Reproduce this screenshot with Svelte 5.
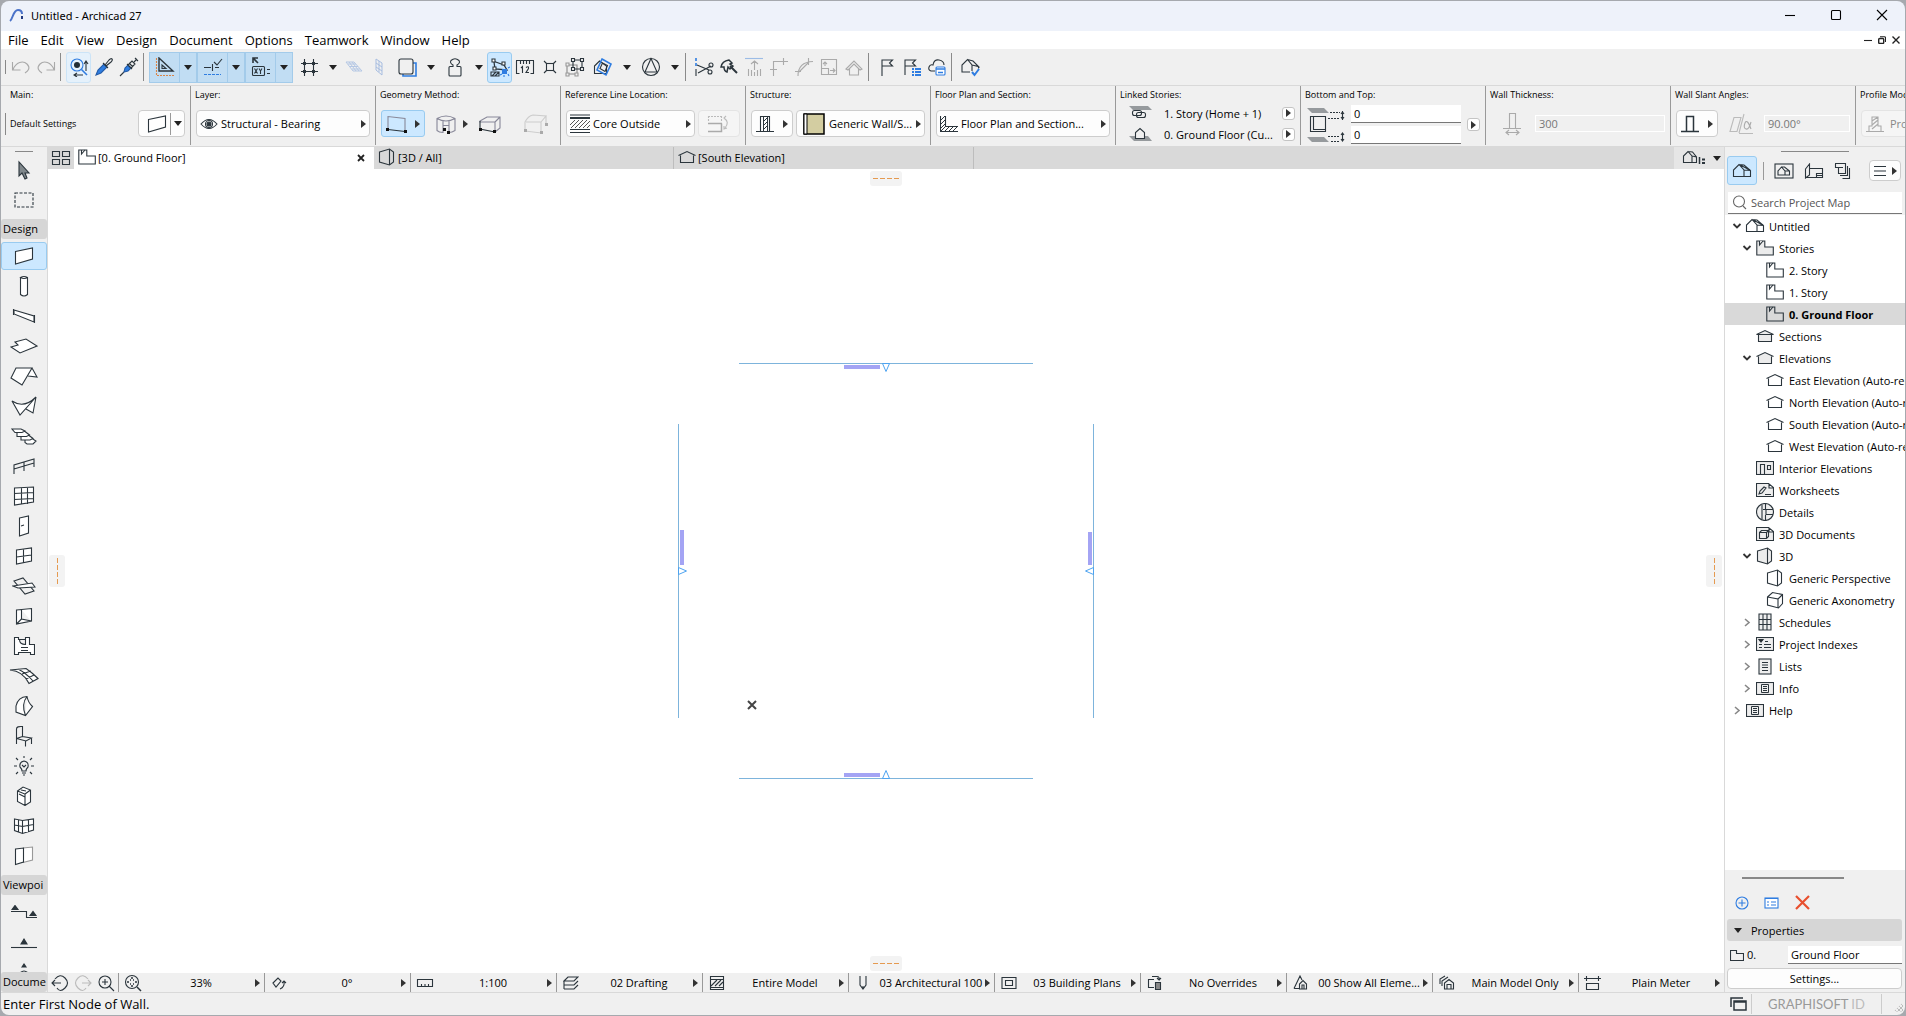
<script lang="ts">
    const blue = '#2f7de1'

    // [width, height, svg body]
    const icons: Record<string, [number, number, string]> = {
        logo: [16, 16, '<path d="M1 14C4 12 4 3 9 3c3 0 4 2 4 4" stroke="#4a72c8" stroke-width="2"/><path d="M13 9v3" stroke="#223a80" stroke-width="2"/>'],
        min: [12, 12, '<path d="M1 6.500h10" stroke="#000"/>'],
        max: [12, 12, '<rect x="1.500" y="1.500" width="9" height="9" rx="1" stroke="#000"/>'],
        close: [12, 12, '<path d="M1 1l10 10M11 1L1 11" stroke="#000"/>'],
        mdiMin: [8, 8, '<path d="M0 4.500h8" stroke="#222"/>'],
        mdiRestore: [8, 8, '<rect x=".7" y="2.500" width="5" height="5" rx="1" stroke="#222" stroke-width="1.400"/><path d="M2 .7h4.500q1 0 1 1V6" stroke="#222"/>'],
        mdiClose: [8, 8, '<path d="M.5.5l7 7M7.500.500l-7 7" stroke="#222" stroke-width="1.400"/>'],
        tabClose: [8, 8, '<path d="M1 1l6 6M7 1L1 7" stroke="#222" stroke-width="1.800"/>'],
        down: [8, 5, '<path d="M0 0h8L4 5z" fill="#222" stroke="none"/>'],
        right: [5, 8, '<path d="M0 0v8l5-4z" fill="#333" stroke="none"/>'],
        undo: [20, 16, '<path d="M1.500 3v8h8M2 10.500C5 3 12 1 16 5s1 7-2 9" stroke="#a9a9a9"/>'],
        redo: [20, 16, '<path d="M18.500 3v8h-8M18 10.500C15 3 8 1 4 5s-1 7 2 9" stroke="#a9a9a9"/>'],
        find: [20, 20, `<circle cx="8" cy="8" r="6" stroke="${blue}"/><path d="M12.500 12.500L18 18" stroke="${blue}" stroke-width="1.600"/><circle cx="8" cy="8" r="3" fill="#222d33" stroke="none"/><path d="M17 14V5m-2 2l2-3 2 3M14 18H6m2-2l-3 2 3 2"/>`],
        dropper: [20, 20, `<path d="M2 18l2-5 6-6 3 3-6 6z" fill="${blue}" stroke="#245ca8"/><path d="M9 6l5 5M11 8l4-5q2-2 3-1t-1 3l-5 4"/>`],
        syringe: [20, 20, `<path d="M1 19l4-4" /><path d="M5 15l1-4 3-3 3 3-3 3z" fill="${blue}" stroke="#245ca8"/><path d="M8 7l5 5M10 6l4 4M9 8l4-4 3 3-4 4M15 5l3-3M16 1l3 3"/>`],
        guide: [20, 20, '<path d="M4 1v13h14z" stroke-width="1.400"/><path d="M7 8v3.500h4z"/><path d="M1.500 1v18M2 18.500h17" stroke="#d98447" stroke-dasharray="2 1"/>'],
        snapLine: [20, 20, `<path d="M1 10.500h7M12 10.500h4M9.500 7v7M11 5l3 3 5-6"/><path d="M1 17.500h17" stroke="${blue}" stroke-dasharray="3 1"/>`],
        xy: [20, 20, '<path d="M2 6V1h5M2 1l5 5" stroke-width="1.600"/><rect x="1.500" y="9.500" width="12" height="9" rx="1"/><path d="M3.500 11.500l3 5M6.500 11.500l-3 5M8 11.500l1.500 2.500 1.500-2.500M9.500 14v3M16 12.500h3M16 16.500h3"/>'],
        grid: [20, 20, '<path d="M5.500 2v4M5.500 8v5M5.500 15v4M14.500 2v4M14.500 8v5M14.500 15v4M2 6.500h3M7 6.500h6M15 6.500h4M2 14.500h3M7 14.500h6M15 14.500h4"/><path d="M4 5h3v3H4zM13 5h3v3h-3zM4 13h3v3H4zM13 13h3v3h-3z" fill="#2b353c" stroke="none"/>'],
        planeH: [20, 16, '<path d="M2 3h8l8 9h-9zM6 7.500h8M5 3l7 9M8 3l7 9M4 5h8M8 10h8" stroke="#b4c7e4" stroke-width="1"/>'],
        planeV: [12, 20, '<path d="M3 2l6 4v12l-6-5zM6 4v11M3 6l6 4M3 10l6 4" stroke="#a7bde0" stroke-width="1"/>'],
        trace: [20, 20, `<path d="M6 17v2h13V6h-3" stroke="${blue}" stroke-width="1.600"/><rect x="2" y="2" width="14" height="15" rx="2"/>`],
        weight: [16, 20, '<path d="M6 9.500V8Q2.500 6 4 3.500q4-3.500 8 0Q13.500 6 10 8v1.500h3q1 0 1 1V18q0 1-1 1H3q-1 0-1-1v-7.500q0-1 1-1z"/>'],
        suspend: [20, 20, `<path d="M3 4l11 4M4 5l1 7 12 1-3-5" stroke-width="1.300"/><path d="M1 15h8v4H1zM2 19l4-4M5 19l4-4"/><path d="M2 2h3v3H2zM12 5h3v3h-3zM3 10h3v3H3z" fill="#fff"/><path d="M12 12h5v5h-5z" fill="${blue}" stroke="none"/><path d="M10 18l2-1M14 18v2M18 17l1 2M18 11l2-1" stroke="${blue}"/>`],
        ruler: [20, 20, '<path d="M18.500 4v12.500h-3M1.500 4v12.500h3M1 3.500h18M5.500 4v3M8.500 4v3M11.500 4v3M14.500 4v3M6 11l1.500-1.500V16M11 10.500q3-2 2.500 1L11 15.500h3"/>'],
        explode: [20, 20, '<path d="M4 4l12 12M16 4L4 16"/><rect x="6.500" y="6.500" width="7" height="7" fill="#f0f0f0"/>'],
        group: [20, 20, '<path d="M2 8v9h10v-9z" stroke="#888"/><path d="M8 3h9v9H8z"/><path d="M6.500 1.500h3v3h-3zM15.500 1.500h3v3h-3zM15.500 10.500h3v3h-3zM6.500 10.500h3v3h-3z" fill="#f0f0f0"/><path d="M1 6h3v3H1zM1 16h3v3H1zM10 16h3v3h-3z" stroke="#999" fill="#f0f0f0"/>'],
        box3d: [20, 20, `<path d="M1.500 9l5-5 7 5v7.500h-12z"/><path d="M9 2l9 5-5 11-9-5z" stroke="${blue}" stroke-width="1.600"/><path d="M9.500 6l5 2.500-2.500 6-5-3z"/>`],
        north: [20, 20, '<circle cx="10" cy="10" r="8.500"/><path d="M10 1.500L4 15h12z"/>'],
        cut: [20, 20, `<path d="M2 1v3M2 6v3" stroke="${blue}" stroke-width="1.600"/><path d="M2 12v7M3 8l12 5M4 16l13-7"/><circle cx="17" cy="8" r="2"/><circle cx="16" cy="15" r="2"/>`],
        axe: [20, 20, '<path d="M2 10q1-6 8-7l3 3-2 1 3 2-3 3-2-2-1 5q-3-1-3-5z" stroke-width="1.500"/><path d="M11 9l7 7" stroke-width="2"/>'],
        adjust: [20, 20, '<path d="M1 1.500h18" stroke="#9cbce6"/><path d="M10.500 13V4M7 7l3.500-3L14 7M4.500 12v7M7.500 13v6M13.500 13v6M16.500 12v7M10.500 15v4" stroke="#aaa"/>'],
        intersect: [20, 20, '<path d="M4.500 19V4.500H19M14.500 1v7M1 12.500h7" stroke="#aaa"/>'],
        fillet: [20, 20, '<path d="M4 19Q4 5 19 4.500M14.500 1v7M1 14.500h6M5 15L15 5" stroke="#aaa"/>'],
        resize: [20, 20, '<path d="M2.500 2.500h15v15h-15zM2.500 11.500h7v6M6 9V5m-2 2l2-2 2 2M11 13.500h5m-2-2l2 2-2 2" stroke="#aaa"/>'],
        roofs: [20, 20, '<path d="M2 12l8-8 8 8-2 1-6-6-6 6zM5.500 12v6h9v-6" stroke="#aaa"/>'],
        flag: [16, 20, '<path d="M3 19V3h10.500l-3 3 3 3H3"/>'],
        flagList: [20, 20, `<path d="M3 18V3h10.500l-3 3 3 3H3"/><path d="M10 11h2v2h-2zM13 11h6v2h-6zM10 14h2v2h-2zM13 14h6v2h-6zM10 17h2v2h-2zM13 17h6v2h-6z" fill="${blue}" stroke="none"/>`],
        cloud: [20, 20, `<path d="M8 14H4q-3-1-2-4t4-2q1-6 6-5t5 5"/><rect x="9" y="10" width="9" height="8" rx="1" stroke="${blue}" fill="#fff"/><path d="M9 12h9M11 15.500h5" stroke="${blue}" stroke-width="1.600"/>`],
        check: [20, 20, `<path d="M10 15H2V8l5.500-5.500L12 8v6M7.500 2.500L13 4l5.500 5.500L12 8M18.500 9.500v2"/><path d="M12 15l2.500 3 4.500-6" stroke="${blue}" stroke-width="2"/>`],
        wall: [20, 20, '<path d="M1.500 5.500L18.500 2v11l-17 5z" fill="#fff"/>'],
        eye: [18, 12, '<path d="M1 6q8-9 16 0-8 9-16 0z"/><circle cx="9" cy="6" r="3.500"/><circle cx="9" cy="6" r="2" fill="#2b353c"/>'],
        geoWall: [22, 20, '<path d="M2 15V2.500l17 2V18" stroke="#889"/><path d="M2 15.500l17 2"/><path d="M0 14h3v3H0zM18 16h3v3h-3z" fill="#111" stroke="none"/>'],
        geoCurve: [22, 20, '<path d="M2 4.500q9-5 18 0v12q-3 2-6 2v-7H8v7q-4 0-6-2zM2 4.500q9 5 18 0M8 7v5M14 7v5" stroke="#889"/><path d="M8 14h3v3H8zM12 17h3v3h-3z" fill="#111" stroke="none"/>'],
        geoBox: [24, 20, '<path d="M2 7l7-4h13v11l-5 4V8H2zM17 8l5-5" stroke="#889"/><path d="M2 7v8l15 3"/><path d="M1 14h3v3H1zM15 16h3v3h-3z" fill="#111" stroke="none"/>'],
        geoPoly: [26, 22, '<path d="M2 18V9q3-6 8-7l13 1-5 6H3M18 9v11L2 18M23 3v9" stroke="#ccc"/><path d="M1 16h3v3H1zM17 18h3v3h-3zM22 10h3v3h-3z" fill="#aaa" stroke="none"/>'],
        coreOut: [20, 20, '<path d="M0 1h20" stroke-width="1"/><path d="M0 4h20" stroke-width="2"/><path d="M0 15.500h20M0 18.500h20"/><path d="M1 14l8-8M5 14l8-8M9 14l8-8M13 14l7-7M17 14l3-3M0 11l5-5" stroke="#555" stroke-width="1"/>'],
        flip: [24, 20, '<path d="M1 2.500h14M1.500 2v6M14.500 2v6" stroke="#bbb" stroke-dasharray="2 1"/><path d="M1 9.500h14M1 17.500h13.500v-8" stroke="#aaa" stroke-width="1.500"/><path d="M17 4q6 4 1 10M19 2l-2 2 2 2M20 14l-3 1v-3" stroke="#bbb"/>'],
        wallBasic: [18, 18, '<path d="M0 16.500h18M4.500 16V1.500h9V16"/><path d="M7.500 2v14M11.500 2v14M8 6l3-3M8 10l3-3M8 14l3-3" stroke-width="1"/>'],
        fillSwatch: [26, 22, '<rect x="4" y="1" width="20" height="20" fill="#d3cda1" stroke="#000" stroke-width="1.500"/><path d="M4 1h3v20H4z" fill="#fff" stroke="#000" stroke-width="1"/>'],
        floorPlan: [18, 18, '<path d="M.5 1v15.500H18M5.500 1v10.500H18" /><path d="M1 5l4-4M1 9l5-5M1 13l5-5M1 16l5-5M5 16l5-5M9 16l5-5M13 16l5-5" stroke-width="1"/>'],
        linkTop: [24, 14, '<path d="M0 0h19l4 4H4z" fill="#969a9d" stroke="none"/><rect x="3.500" y="4.500" width="9" height="5" rx="2" fill="#f0f0f0"/><rect x="7.500" y="6.500" width="9" height="5" rx="2"/>'],
        linkBottom: [24, 14, '<path d="M0 9h19l4 5H5z" fill="#969a9d" stroke="none"/><path d="M6.500 11.500v-6L11 1.500l4.500 4v6z" fill="#f0f0f0"/>'],
        heights: [38, 36, '<path d="M0 1h17l5 5H5zM0 30h17l5 5H5z" fill="#969a9d" stroke="none"/><path d="M3.500 9.500h15v15h-15zM6.500 9.500v13h12" /><path d="M23 5.500h10M21 11.500h12M21 29.500h12M24 34.500h9" stroke-dasharray="2 1"/><path d="M35.500 4v9M35.500 26v8M34 7l1.500-2L37 7M34 10l1.500 2 1.500-2M34 28l1.500-2 1.500 2M34 32l1.500 2 1.500-2" />'],
        thickness: [18, 24, '<path d="M0 16.500h18M6.500 16V1.500h6V16M3 20.500h13M6 18l-3 2.500L6 23M13 18l3 2.500-3 2.500" stroke="#aaa"/>'],
        vertical: [18, 18, '<path d="M0 16.500h18M5.500 16V1.500h7V16" stroke-width="1.500"/>'],
        alpha: [24, 22, '<path d="M1 18.500L5 4.500h7l-4 14zM10 20L15 1M10 20.500h14" stroke="#bbb"/><path d="M22 9q-2 8-5 7t-1-6 6 6" stroke="#aaa"/>'],
        profile: [18, 18, '<path d="M0 16.500h18M3 16v-5h3V2h6v9h3v5M6 6l6-4M6 10l6-5M6 14l6-5" stroke="#aaa"/>'],
        quad: [20, 16, '<path d="M1.500 1.500h7v5h-7zM11.500 1.500h7v5h-7zM1.500 9.500h7v5h-7zM11.500 9.500h7v5h-7z"/>'],
        story: [18, 16, '<path d="M.8 1h8v6h8.500v8H.8z"/><path d="M3.500 1v4L7 1"/>'],
        view3d: [18, 18, '<path d="M1.500 4l10-3 4 3v10l-4 3-10-3zM11.500 1v16"/>'],
        axon: [18, 18, '<path d="M1.500 6l5-4.500 10 2v9l-4 4.500-11-3zM1.500 6l10.500 2v9M12 8l4.500-4.500"/>'],
        elevation: [18, 14, '<path d="M2.500 5.500v7h13v-7M.5 5.500l8.500-4 8.500 4"/>'],
        section: [18, 14, '<path d="M2.500 5.500v7h13v-7M.5 5.500l8.500-4 8.500 4z"/>'],
        house: [20, 16, '<path d="M1.500 13.500V7L7 1.500 12 7v6.500zM7 1.500l5 .5 6.500 5.500v6H12M12 7l6.500.5M7 1.500l6 3 5.500 3"/>'],
        tabMenu: [24, 16, '<path d="M1.500 12.500V6L6 1.500 10 6v6.500zM6 1.500l4.500.5 4 5v5.500H10M10 6l4.500 1"/><path d="M17.500 7v7" stroke-width="1.500"/><path d="M20 9.500h3M20 13h3" stroke-width="2"/>'],
        viewMap: [20, 16, '<rect x="1" y="1" width="18" height="14"/><path d="M4 12V8l3.500-4L11 8v4zM7.500 4h3l5 4v4H11M11 8h4.500"/>'],
        layout: [20, 16, '<path d="M1.500 6l4-5v11l-4 3zM6 5.500h12.500v9H1.500M12.500 14.500v-4h6M12.500 12.500h6"/>'],
        publisher: [18, 18, '<path d="M1 1.500h10.500v10H4.500V5M1.500 2v3.500h7.500M13.500 4v9.500H6M15.500 6v10.500H8.500"/>'],
        burger: [14, 12, '<path d="M1 1.500h12M1 6h12M1 10.500h12"/>'],
        search: [15, 15, '<circle cx="7" cy="6.500" r="5.500" stroke="#666"/><path d="M11 11l3 3" stroke="#666"/>'],
        open: [10, 8, '<path d="M1.500 2L5 5.500 8.500 2" stroke="#333" stroke-width="1.800"/>'],
        shut: [10, 9, '<path d="M3 1l4 3.500L3 8" stroke="#888" stroke-width="1.600"/>'],
        interior: [18, 14, '<rect x=".5" y=".5" width="17" height="13" fill="#eee"/><path d="M4.500 13V3.500h4V13M11.500 4.500h3v4h-3z"/>'],
        worksheet: [18, 14, '<path d="M.500.500h12l5 4v9H.5zM13 1v4h4" fill="#eee"/><path d="M3 11l1-3 4-4 2 1-4 5zM9 11.500h6"/>'],
        detail: [18, 18, '<circle cx="9" cy="9" r="8.500" fill="#eee"/><path d="M6 1.500v15M9.500 1v5.500h7.500M7 6.500h3v5h7M9.500 12v5"/>'],
        doc3d: [18, 14, '<path d="M.500.500h12l5 4v9H.5zM13 1v4h4" fill="#eee"/><path d="M3.500 5.500l2-2h7v6l-2 2h-7zM3.500 5.500h7v6M10.500 5.500l2-2"/>'],
        schedule: [14, 18, '<path d="M1 1h12v16H1zM5 1v16M9 1v16M1 6.500h12M1 11.500h12" fill="#eee"/>'],
        index: [18, 14, '<rect x=".5" y=".5" width="17" height="13" fill="#eee"/><path d="M3 2.500h4L5 5z" fill="#222"/><path d="M9 4.500h3M3 7.500h3M8 7.500h7M3 10.500h3M8 10.500h7"/>'],
        list: [14, 17, '<rect x="1" y="1" width="12" height="15" fill="#eee"/><path d="M4 4.500h6M4 7h6M4 9.500h6M4 12.500h6"/>'],
        info: [18, 13, '<rect x=".5" y=".5" width="17" height="12" fill="#eee"/><path d="M5.500 2.500h7v8h-7zM7 4.500h4M7 6.500h4M7 8.500h4" stroke-width="1"/>'],
        plus: [14, 14, `<circle cx="7" cy="7" r="6" stroke="${blue}"/><path d="M7 3.500v7M3.500 7h7" stroke="${blue}"/>`],
        props: [16, 12, `<rect x="1" y="1" width="13" height="10" stroke="${blue}" fill="#fff"/><path d="M1 1.500h13M3 5h2M7 5h5M3 8h2M7 8h5" stroke="${blue}"/>`],
        remove: [15, 15, '<path d="M1 1l13 13M14 1L1 14" stroke="#e8502f" stroke-width="2.200"/>'],
        folder: [14, 12, '<path d="M.5 1.500h6v3h7v7H.5z"/>'],
        windows: [17, 14, '<path d="M1 10V1h12" stroke-width="1.500"/><path d="M4 4h12v9H4zM4 5h12" stroke-width="1.500"/>'],
        pointer: [14, 20, '<path d="M2 2v14l3-3 3 6 2-1-2-5h4z" fill="#80888c"/>'],
        marquee: [20, 16, '<rect x="1" y="1" width="18" height="14" stroke-dasharray="3 1.500"/>'],
        column: [10, 22, '<path d="M1.500 2.500v17q3.500 3 7 0v-17q-3.500-2-7 0q3.500 2 7 0" fill="#fff"/>'],
        beam: [24, 16, '<path d="M2 2l20 6v6L2 6zM1.500 1v6M22.500 7v8" fill="#fff"/>'],
        slab: [28, 16, '<path d="M1 9l7-2-3-3 11-3 11 7-17 7z" fill="#fff"/>'],
        roof: [28, 20, '<path d="M6 2h16L12 19 1 12zM22 2l5 9-9-1" fill="#fff"/>'],
        shell: [28, 20, '<path d="M2 5q12 8 24-4L10 19zM26 1l-3 16-7-4" fill="#fff"/>'],
        stair: [26, 18, '<path d="M1 2h9l4 2-3 1.500H4zM6 6v3.500h9.500l3-1.500-4.500-3.500M10 9.500V13h9l3-1.500-4-3M14 13v2.500l2 1.500h6l3-3-4-2.500" fill="#fff"/>'],
        railing: [24, 18, '<path d="M2 17V8l20-6v8M2 12l20-6M12 5v9"/>'],
        curtain: [22, 20, '<path d="M1.500 2l19-1v15l-19 3zM8.500 1.500v17M14.500 1v17M1 7.500l20-1M1 13.500l20-1" fill="#fff"/>'],
        door: [12, 22, '<path d="M1.500 3l9-2v17l-9 3zM3 11l3-1" fill="#fff"/>'],
        windowI: [18, 18, '<path d="M1.500 3l15-2v13l-15 3zM8.500 2v14M1.500 10l15-2" fill="#fff"/>'],
        skylight: [24, 18, '<path d="M2 4l9-3 11 13-9 3z"/><path d="M1 9l19-3 3 4-17 1z" fill="#fff"/>'],
        opening: [18, 18, '<path d="M1.500 3l15-1.500V14l-15 3zM6.500 3v9l10 2M6.500 12l-5 5" fill="#fff"/>'],
        zone: [22, 20, '<path d="M1.500 1.500h4v2h7v-2h4v7h5v10h-4v-2h-12v2h-4zM6.500 3.500q0 5 6 5v-5M8 11.500h7M8 14.500h7" fill="#fff"/>'],
        mesh: [30, 18, '<path d="M1 3l16-1.500q6 4 12 10l-9 5Q14 4 1 3zM9 2q8 4 15 12M13 7l9-3M17 12l8-4" fill="#fff"/>'],
        morph: [20, 22, '<path d="M2 11Q4 2 13 1.500q1 6 5.500 10l-7 9L2 17zM13 1.500Q7 9 11.500 20.500" fill="#fff"/>'],
        chair: [18, 22, '<path d="M1.500 19V4q0-3 6-2.500v10l9 1.500-5.500 3-9.500-2.500M10.500 16v5.500M16.500 13v6M1.500 13.500l6-2"/>'],
        lamp: [20, 20, '<path d="M8 15q0-2-2-4-1-5 4-6 5 1 4 6-2 2-2 4zM8 17h4M9 19h2M10 0v2M0 10h3M17 10h3M2 2l2 2M18 2l-2 2M2 18l2-2M18 18l-2-2M8 9l2 2 2-2"/>'],
        equipment: [16, 20, '<path d="M1.500 5L7 1l7.500 3v12L9 19.500l-7.500-4zM1.500 5L9 8v11M9 8l5.500-4M3 8l6 3M5 4l5 1" fill="#fff"/>'],
        curtain2: [22, 18, '<path d="M1.500 2l8 1.500 11-1.500v11l-11 3.500-8-3zM9.500 3v14M5.500 3v12M15.500 3v12M1.500 8l8 1.500 11-2" fill="#fff"/>'],
        cornerWin: [20, 20, '<path d="M9 2l9.500-1v13L9 16.500" stroke="#999" fill="#fff"/><path d="M1.500 3l8-1v14l-8 2.500z" fill="#fff"/>'],
        secMark: [26, 14, '<path d="M0 6.500h15.500v6H26" /><path d="M1 4.500l3-4 3 4zM19 10.500l3-4 3 4z" fill="#2b353c"/>'],
        elevMark: [26, 14, '<path d="M0 12.500h26"/><path d="M10 9l3-5 3 5z" fill="#2b353c"/>'],
        intMark: [22, 20, '<path d="M9 5l2-3 2 3z" fill="#2b353c"/><path d="M6 12q5-6 10 0M2 12.500h3M17 12.500h3"/>'],
        zoomPrev: [18, 18, '<path d="M4 5q5-6 10-1t0 10-8 0M1 9h9M4 6L1 9l3 3"/>'],
        zoomNext: [18, 18, '<path d="M14 5Q9-1 4 4t0 10 8 0M17 9H8M14 6l3 3-3 3" stroke="#bbb"/>'],
        zoomIn: [18, 18, '<circle cx="8" cy="8" r="6"/><path d="M12 12l5 5M5 8h6M8 5v6"/>'],
        zoomFit: [18, 18, '<circle cx="8" cy="8" r="6.500"/><path d="M13 13l4 4M8 3v2M8 11v2M3 8h2M11 8h2M6 6h1M9 6h1M6 10h1M9 10h1" stroke-width="1.500"/>'],
        orient: [16, 16, '<path d="M2 8l5-5 3 3-5 6zM9 14q5-2 4-8M11 8l2-2 2 2"/>'],
        scale: [18, 10, '<path d="M1.500 1.500h15v7h-15zM5.500 8.500V6M9 8.500V6M12.500 8.500V6"/>'],
        layers: [16, 16, '<path d="M1 6l4-4h10l-4 4zM1 10h10l4-4M1 14h10l4-4M1 6v8"/>'],
        model: [16, 16, '<path d="M1.500 1.500h13v13h-13zM1.500 4.500h13M1.500 12.500h13"/><path d="M2 11l6-6M6 11l6-6M10 11l4-4"/>'],
        pen: [10, 16, '<path d="M2 1v9l3 4 3-4V1M5 11v3"/>'],
        plans: [16, 14, '<path d="M1 1.500h14v11H1zM4.500 4.500h7v5h-7z"/>'],
        override: [16, 16, '<path d="M7 4.500H1.500v8H7M5 1.500h5q3 0 2 4M10 3l2 2 2-2"/><path d="M8.500 7.500h5v7h-5z" fill="#888"/>'],
        reno: [16, 16, '<path d="M1 13.500L7 1l2 4M1 13.500h5M6.500 14V9L10 5.500 13.500 9v5zM9 14v-4h2v4"/>'],
        structure: [16, 16, '<path d="M5.500 14V8L10 4.500 14.500 8v6zM8 14V9.500h4V14M3 11V6l6-4M1 9V4l5-3"/>'],
        dimension: [18, 16, '<path d="M0 3.500h17M2.500 1v5M14.500 1v5M2.500 8.500h12v6h-12z"/>'],
    }

    // 'a|' is a split button, '-' a separator, '!', '*' and '~' the highlighted tools
    const toolbar = ['undo', 'redo', '-', '~find', 'dropper', 'syringe', '-', '!guide|', '!snapLine|', '!xy|', 'grid|', 'planeH', 'planeV', 'trace|', 'weight|', '*suspend', 'ruler', 'explode', 'group', 'box3d|', 'north|', '-', 'cut', 'axe', 'adjust', 'intersect', 'fillet', 'resize', 'roofs', '-', 'flag', 'flagList', 'cloud', '-', 'check']
    const iconName = (t: string) => t.replace(/[^\w]/g, '')

    const menus = ['File', 'Edit', 'View', 'Design', 'Document', 'Options', 'Teamwork', 'Window', 'Help']
    const designTools = ['wall', 'column', 'beam', 'slab', 'roof', 'shell', 'stair', 'railing', 'curtain', 'door', 'windowI', 'skylight', 'opening', 'zone', 'mesh', 'morph', 'chair', 'lamp', 'equipment', 'curtain2', 'cornerWin']
    const viewTools = ['secMark', 'elevMark', 'intMark']

    const tree = [
        { level: 0, arrow: 'open', icon: 'house', label: 'Untitled' },
        { level: 1, arrow: 'open', icon: 'story', label: 'Stories', tint: true },
        { level: 2, icon: 'story', label: '2. Story' },
        { level: 2, icon: 'story', label: '1. Story' },
        { level: 2, icon: 'story', label: '0. Ground Floor' },
        { level: 1, icon: 'section', label: 'Sections', tint: true },
        { level: 1, arrow: 'open', icon: 'elevation', label: 'Elevations', tint: true },
        { level: 2, icon: 'elevation', label: 'East Elevation (Auto-rebuild Model)' },
        { level: 2, icon: 'elevation', label: 'North Elevation (Auto-rebuild Model)' },
        { level: 2, icon: 'elevation', label: 'South Elevation (Auto-rebuild Model)' },
        { level: 2, icon: 'elevation', label: 'West Elevation (Auto-rebuild Model)' },
        { level: 1, icon: 'interior', label: 'Interior Elevations' },
        { level: 1, icon: 'worksheet', label: 'Worksheets' },
        { level: 1, icon: 'detail', label: 'Details' },
        { level: 1, icon: 'doc3d', label: '3D Documents' },
        { level: 1, arrow: 'open', icon: 'view3d', label: '3D', tint: true },
        { level: 2, icon: 'view3d', label: 'Generic Perspective' },
        { level: 2, icon: 'axon', label: 'Generic Axonometry' },
        { level: 1, arrow: 'shut', icon: 'schedule', label: 'Schedules' },
        { level: 1, arrow: 'shut', icon: 'index', label: 'Project Indexes' },
        { level: 1, arrow: 'shut', icon: 'list', label: 'Lists' },
        { level: 1, arrow: 'shut', icon: 'info', label: 'Info' },
        { level: 0, arrow: 'shut', icon: 'info', label: 'Help' },
    ]

    const quickOptions = [
        ['zoomFit', '33%', 'Zoom'],
        ['orient', '0°', 'Orientation'],
        ['scale', '1:100', 'Scale'],
        ['layers', '02 Drafting', 'Layer combination'],
        ['model', 'Entire Model', 'Structure display'],
        ['pen', '03 Architectural 100', 'Pen set'],
        ['plans', '03 Building Plans', 'Model view options'],
        ['override', 'No Overrides', 'Graphic overrides'],
        ['reno', '00 Show All Eleme...', 'Renovation filter'],
        ['structure', 'Main Model Only', 'Design options'],
        ['dimension', 'Plain Meter', 'Dimensions'],
    ]

    let tool = $state('wall')
    let selected = $state('0. Ground Floor')
    let activeTab = $state(0)
    let search = $state('')
    let bottom = $state('0')
    let top = $state('0')
    let storyName = $state('Ground Floor')
</script>

{#snippet icon(name: string)}
    <svg
        class="icon"
        width={icons[name][0]}
        height={icons[name][1]}
        viewBox="0 0 {icons[name][0]} {icons[name][1]}"
        aria-hidden="true"
    >{@html icons[name][2]}</svg>
{/snippet}

{#snippet combo(glyph: string, value: string, label: string)}
    <label class="combo">
        {@render icon(glyph)}
        <select aria-label={label}><option>{value}</option></select>
        {@render icon('right')}
    </label>
{/snippet}

<div class="app">
    <header class="titlebar">
        {@render icon('logo')}
        <span class="title">Untitled - Archicad 27</span>
        <button aria-label="Minimize">{@render icon('min')}</button>
        <button aria-label="Maximize">{@render icon('max')}</button>
        <button aria-label="Close">{@render icon('close')}</button>
    </header>

    <nav class="menubar">
        {#each menus as m}
            <button>{m}</button>
        {/each}
        <span class="spacer"></span>
        <button class="mdi" aria-label="Minimize drawing">{@render icon('mdiMin')}</button>
        <button class="mdi" aria-label="Restore drawing">{@render icon('mdiRestore')}</button>
        <button class="mdi" aria-label="Close drawing">{@render icon('mdiClose')}</button>
    </nav>

    <div class="toolbar">
        <span class="grip"></span>
        {#each toolbar as t}
            {#if t === '-'}
                <span class="sep"></span>
            {:else if t.endsWith('|')}
                <button class="tool wide" class:pressed={t[0] === '!'} aria-label={iconName(t)}>{@render icon(iconName(t))}</button>
                <button class="tool drop" class:pressed={t[0] === '!'} aria-label="{iconName(t)} options">{@render icon('down')}</button>
            {:else}
                <button class="tool" class:on={t[0] === '*'} class:soft={t[0] === '~'} aria-label={iconName(t)}>{@render icon(iconName(t))}</button>
            {/if}
        {/each}
    </div>

    <div class="infobox">
        <section class="main-cell">
            <h2>Main:</h2>
            <div class="cell">
                <span class="grip"></span>
                <span class="small">Default Settings</span>
                <button class="btn split" aria-label="Wall favorites">{@render icon('wall')}<span class="bar"></span>{@render icon('down')}</button>
            </div>
        </section>
        <section>
            <h2>Layer:</h2>
            <div class="cell">{@render combo('eye', 'Structural - Bearing', 'Layer')}</div>
        </section>
        <section>
            <h2>Geometry Method:</h2>
            <div class="cell geo">
                <button class="btn on" aria-label="Straight">{@render icon('geoWall')}{@render icon('right')}</button>
                <button class="bare" aria-label="Curved">{@render icon('geoCurve')}{@render icon('right')}</button>
                <button class="bare" aria-label="Trapezoid">{@render icon('geoBox')}</button>
                <button class="bare last" aria-label="Polygonal">{@render icon('geoPoly')}</button>
            </div>
        </section>
        <section>
            <h2>Reference Line Location:</h2>
            <div class="cell">
                {@render combo('coreOut', 'Core Outside', 'Reference line')}
                <button class="btn ghost" aria-label="Flip reference line" disabled>{@render icon('flip')}</button>
            </div>
        </section>
        <section>
            <h2>Structure:</h2>
            <div class="cell">
                <button class="btn" aria-label="Structure type">{@render icon('wallBasic')}{@render icon('right')}</button>
                {@render combo('fillSwatch', 'Generic Wall/S...', 'Building material')}
            </div>
        </section>
        <section>
            <h2>Floor Plan and Section:</h2>
            <div class="cell">{@render combo('floorPlan', 'Floor Plan and Section...', 'Floor plan and section')}</div>
        </section>
        <section>
            <h2>Linked Stories:</h2>
            <div class="stack">
                <div class="story-row">{@render icon('linkTop')}<span>1. Story (Home + 1)</span><button class="mini" aria-label="Top story">{@render icon('right')}</button></div>
                <div class="story-row">{@render icon('linkBottom')}<span>0. Ground Floor (Cu...</span><button class="mini" aria-label="Home story">{@render icon('right')}</button></div>
            </div>
        </section>
        <section>
            <h2>Bottom and Top:</h2>
            <div class="heights">
                {@render icon('heights')}
                <div class="fields">
                    <input aria-label="Top offset" bind:value={top} />
                    <input aria-label="Bottom offset" bind:value={bottom} />
                </div>
                <button class="mini" aria-label="Height options">{@render icon('right')}</button>
            </div>
        </section>
        <section>
            <h2>Wall Thickness:</h2>
            <div class="cell thick">
                {@render icon('thickness')}
                <input aria-label="Wall thickness" value="300" disabled />
            </div>
        </section>
        <section>
            <h2>Wall Slant Angles:</h2>
            <div class="cell slant">
                <button class="btn" aria-label="Wall complexity">{@render icon('vertical')}{@render icon('right')}</button>
                {@render icon('alpha')}
                <input aria-label="Slant angle" value="90.00°" disabled />
            </div>
        </section>
        <section>
            <h2>Profile Modifiers:</h2>
            <div class="cell"><button class="btn ghost profile" disabled>{@render icon('profile')}Profile</button></div>
        </section>
    </div>

    <div class="workspace">
        <aside class="toolbox">
            <span class="handle"></span>
            <button class="pick" aria-label="Arrow">{@render icon('pointer')}</button>
            <button class="pick" aria-label="Marquee">{@render icon('marquee')}</button>
            <h3>Design</h3>
            {#each designTools as t}
                <button class="pick" class:on={tool === t} aria-label={t} onclick={() => (tool = t)}>{@render icon(t)}</button>
            {/each}
            <h3>Viewpoi</h3>
            <div class="clipped">
                {#each viewTools as t}
                    <button class="pick" aria-label={t}>{@render icon(t)}</button>
                {/each}
            </div>
            <h3 class="last">Docume</h3>
        </aside>

        <main>
            <div class="tabs">
                <button class="overview" aria-label="Tab overview">{@render icon('quad')}</button>
                {#each [['story', '[0. Ground Floor]'], ['view3d', '[3D / All]'], ['elevation', '[South Elevation]']] as [glyph, label], i}
                    <div class="tab" class:active={activeTab === i}>
                        <button class="tab-name" onclick={() => (activeTab = i)}>{@render icon(glyph)}{label}</button>
                        {#if activeTab === i}
                            <button class="tab-close" aria-label="Close tab">{@render icon('tabClose')}</button>
                        {/if}
                    </div>
                {/each}
                <button class="tab-menu" aria-label="Tab options">{@render icon('tabMenu')}{@render icon('down')}</button>
            </div>

            <div class="canvas">
                <span class="guide h start"></span>
                <span class="guide h end"></span>
                <span class="guide v start"></span>
                <span class="guide v end"></span>
                <svg width="416" height="416" viewBox="0 0 416 416" role="img" aria-label="Ground floor plan">
                    <g stroke="#7db4dc" fill="none">
                        <path d="M61 .5h294M61 415.500h294M.5 61v294M415.500 61v294" />
                        <path d="M204.500.500h7l-3.500 8zM204.500 415.500h7l-3.500-8zM.500 204.500v7l8-3.500zM415.500 204.500v7l-8-3.500z" stroke="#4da3f0" />
                    </g>
                    <path d="M166 2h36v4h-36zM166 410h36v4h-36zM2 167h4v35H2zM410 169h4v33h-4z" fill="#a4a4f4" />
                    <path d="M70 338l8 8M78 338l-8 8" stroke="#444" stroke-width="2" />
                </svg>
            </div>

            <div class="quickbar">
                <div class="zooms">
                    <button aria-label="Previous zoom">{@render icon('zoomPrev')}</button>
                    <button aria-label="Next zoom">{@render icon('zoomNext')}</button>
                    <button aria-label="Zoom in">{@render icon('zoomIn')}</button>
                </div>
                {#each quickOptions as [glyph, value, label]}
                    <label class="quick">
                        <span class="glyph">{@render icon(glyph)}</span>
                        <select aria-label={label}><option>{value}</option></select>
                        {@render icon('right')}
                    </label>
                {/each}
            </div>
        </main>

        <aside class="navigator">
            <span class="handle"></span>
            <div class="nav-modes">
                <button class="btn on" aria-label="Project map">{@render icon('house')}</button>
                <span class="bar"></span>
                <button class="bare" aria-label="View map">{@render icon('viewMap')}</button>
                <button class="bare" aria-label="Layout book">{@render icon('layout')}</button>
                <button class="bare" aria-label="Publisher sets">{@render icon('publisher')}</button>
                <button class="btn menu" aria-label="Navigator options">{@render icon('burger')}{@render icon('right')}</button>
            </div>
            <label class="search">
                {@render icon('search')}
                <input aria-label="Search" placeholder="Search Project Map" bind:value={search} />
            </label>
            <ul>
                {#each tree as node}
                    <li>
                        <button
                            class="node level{node.level}"
                            class:selected={selected === node.label}
                            class:tint={node.tint}
                            onclick={() => (selected = node.label)}
                        >
                            <span class="arrow">{#if node.arrow}{@render icon(node.arrow)}{/if}</span>
                            <span class="node-icon">{@render icon(node.icon)}</span>
                            {node.label}
                        </button>
                    </li>
                {/each}
            </ul>
            <div class="props">
                <span class="handle"></span>
                <div class="actions">
                    <button aria-label="New">{@render icon('plus')}</button>
                    <button aria-label="Edit">{@render icon('props')}</button>
                    <button aria-label="Delete">{@render icon('remove')}</button>
                </div>
                <button class="props-head">{@render icon('down')}Properties</button>
                <label class="story-name">
                    {@render icon('folder')}<span>0.</span>
                    <input bind:value={storyName} />
                </label>
                <button class="btn settings">Settings...</button>
            </div>
        </aside>
    </div>

    <footer>
        <span class="hint">Enter First Node of Wall.</span>
        <button aria-label="Message center">{@render icon('windows')}</button>
        <span class="brand">GRAPHISOFT <span>ID</span></span>
        <span class="resize"></span>
    </footer>
</div>

<style>
    :global(body) {
        background: #a6a9ae;
    }

    .app {
        --ink: #2b353c;
        --panel: #f0f0f0;
        --line: #d9d9d9;
        --on: #cce8ff;
        --on-line: #99cbf0;
        box-sizing: border-box;
        height: 100vh;
        padding: 1px;
        display: flex;
        flex-direction: column;
        overflow: hidden;
        font-family: 'Open Sans', 'Noto Sans', sans-serif;
        font-size: 11px;
        color: #000;
    }

    .app * {
        box-sizing: border-box;
    }

    button,
    input,
    select {
        font: inherit;
        color: inherit;
        border: 0;
        padding: 0;
        margin: 0;
        background: none;
        border-radius: 0;
        min-width: 0;
    }

    button {
        display: flex;
        align-items: center;
        justify-content: center;
        white-space: nowrap;
    }

    select {
        appearance: none;
    }

    h2,
    h3 {
        margin: 0;
        font-weight: 400;
    }

    .icon {
        flex: none;
        fill: none;
        stroke: var(--ink);
        stroke-width: 1.1;
    }

    .titlebar {
        height: 30px;
        flex: none;
        display: flex;
        align-items: center;
        padding: 0 0 2px 8px;
        background: #eef2fa;
        border-radius: 8px 8px 0 0;
        font-family: 'Noto Sans', sans-serif;
    }

    .title {
        flex: 1;
        padding-left: 6px;
    }

    .titlebar button {
        width: 46px;
        height: 28px;
    }

    .menubar {
        height: 18px;
        flex: none;
        display: flex;
        background: #fff;
        font-size: 13px;
        padding: 0 2px 0 1px;
    }

    .menubar button {
        padding: 0 6px;
    }

    .menubar .mdi {
        width: 14px;
        padding: 0;
    }

    .spacer {
        flex: 1;
    }

    .toolbar {
        height: 37px;
        flex: none;
        display: flex;
        align-items: center;
        background: var(--panel);
        border-bottom: 1px solid var(--line);
    }

    .grip {
        flex: none;
        width: 1px;
        height: 14px;
        margin: 0 2px 0 4px;
        background: #888;
    }

    .sep {
        flex: none;
        width: 1px;
        height: 28px;
        margin: 0 5px 0 2px;
        background: #8a8a8a;
    }

    .tool {
        flex: none;
        width: 25px;
        height: 31px;
    }

    .tool.wide {
        width: 31px;
    }

    .tool.drop {
        width: 17px;
    }

    .tool.pressed {
        background: #c1ddf3;
        border: 1px solid #a3cbea;
    }

    .tool.drop.pressed {
        border-left: 0;
    }

    .on,
    .btn.on {
        background: var(--on);
        border: 1px solid var(--on-line);
        border-radius: 3px;
    }

    .tool.soft {
        background: #e5f1fb;
        border: 1px solid #cce4f7;
        border-radius: 3px;
    }

    .infobox {
        height: 61px;
        flex: none;
        display: flex;
        overflow: hidden;
        background: var(--panel);
        border-bottom: 1px solid var(--line);
    }

    section {
        flex: none;
        width: 185px;
        height: 59px;
        border-right: 1px solid #999;
        padding: 2px 5px 0 4px;
    }

    section.main-cell {
        width: 190px;
        padding-left: 0;
    }

    h2 {
        font-size: 9px;
        line-height: 14px;
        white-space: nowrap;
    }

    .main-cell h2 {
        padding-left: 9px;
    }

    .cell {
        height: 27px;
        margin-top: 8px;
        display: flex;
        align-items: center;
        gap: 3px;
        padding-left: 1px;
    }

    .main-cell .cell {
        gap: 2px;
        padding-left: 0;
    }

    .main-cell .grip {
        height: 22px;
        margin-right: 0;
    }

    .small {
        flex: 1;
        font-size: 9px;
        padding-left: 2px;
    }

    .btn {
        flex: none;
        height: 27px;
        min-width: 42px;
        gap: 9px;
        background: #fdfdfd;
        border: 1px solid #cdcdcd;
        border-radius: 4px;
    }

    .btn.split {
        width: 47px;
        justify-content: space-between;
        gap: 0;
        padding: 0 2px 0 8px;
    }

    .bar {
        width: 1px;
        height: 22px;
        background: #999;
    }

    .ghost {
        background: #f5f5f5;
        border-color: #e4e4e4;
        color: #888;
    }

    .ghost.profile {
        width: 130px;
        justify-content: flex-start;
        gap: 6px;
        padding-left: 4px;
    }

    .combo {
        flex: 1;
        min-width: 0;
        height: 27px;
        display: flex;
        align-items: center;
        gap: 3px;
        padding: 0 3px;
        background: #fdfdfd;
        border: 1px solid #cdcdcd;
        border-radius: 4px;
    }

    .combo select {
        flex: 1;
    }

    .geo {
        gap: 10px;
    }

    .geo .btn {
        min-width: 44px;
        gap: 7px;
    }

    .bare {
        gap: 6px;
    }

    .bare.last {
        margin-left: auto;
        margin-right: 6px;
    }

    .stack {
        display: flex;
        flex-direction: column;
        gap: 5px;
        padding: 3px 0 0 9px;
    }

    .story-row {
        height: 16px;
        display: flex;
        align-items: center;
        white-space: nowrap;
    }

    .story-row span {
        flex: 1;
        padding-left: 11px;
    }

    .mini {
        flex: none;
        width: 13px;
        height: 13px;
        background: #fff;
        border: 1px solid #c4c4c4;
        border-radius: 3px;
    }

    .heights {
        display: flex;
        align-items: center;
        gap: 6px;
        padding: 3px 0 0 2px;
    }

    .fields {
        display: flex;
        flex-direction: column;
        gap: 3px;
        flex: 1;
        min-width: 0;
    }

    .fields input {
        width: 100%;
        height: 18px;
        padding: 0 3px;
        background: #fff;
        border-bottom: 1px solid #777;
    }

    .cell input {
        flex: 1;
        height: 17px;
        padding: 0 3px;
        color: #777;
        border: 1px solid #fff;
        background: var(--panel);
    }

    .thick {
        gap: 14px;
        padding-left: 13px;
    }

    .slant {
        gap: 11px;
    }

    .workspace {
        flex: 1;
        min-height: 0;
        display: flex;
        border-bottom: 1px solid var(--line);
    }

    .toolbox {
        width: 47px;
        flex: none;
        display: flex;
        flex-direction: column;
        background: var(--panel);
        border-right: 1px solid var(--line);
    }

    .handle {
        flex: none;
        width: 18px;
        height: 1px;
        margin: 4px auto 3px;
        background: #888;
    }

    .pick {
        flex: none;
        height: 30px;
    }

    .pick.on {
        height: 28px;
        margin: 1px 0;
    }

    h3 {
        flex: none;
        height: 20px;
        margin: 4px 0 2px;
        padding-left: 2px;
        font-size: 11px;
        line-height: 20px;
        background: #d6d6d6;
        border-radius: 3px;
    }

    h3.last {
        margin: 0;
    }

    .clipped {
        flex: 1;
        min-height: 0;
        overflow: hidden;
        display: flex;
        flex-direction: column;
    }

    main {
        flex: 1;
        min-width: 0;
        display: flex;
        flex-direction: column;
    }

    .tabs {
        height: 22px;
        flex: none;
        display: flex;
        background: #d9d9d9;
    }

    .overview {
        width: 26px;
    }

    .tab {
        flex: 0 1 300px;
        display: flex;
        border-right: 1px solid #bdbdbd;
    }

    .tab.active {
        background: #fff;
        border-right-color: #fff;
    }

    .tab-name {
        flex: 1;
        justify-content: flex-start;
        gap: 2px;
        padding: 0 0 2px 4px;
    }

    .tab-close {
        width: 24px;
    }

    .tab-menu {
        width: 50px;
        margin-left: auto;
        padding-left: 4px;
        gap: 7px;
        background: #e6e6e6;
    }

    .canvas {
        flex: 1;
        min-height: 0;
        position: relative;
        display: flex;
        align-items: center;
        justify-content: center;
        background: #fff;
    }

    /* docked guide line handles on the four edges of the drawing */
    .guide {
        position: absolute;
        display: flex;
        background: #f3f3f3;
        border-radius: 3px;
    }

    .guide::after {
        content: '';
        margin: auto;
    }

    .guide.h {
        left: calc(50% - 16px);
        width: 32px;
        height: 15px;
    }

    .guide.h::after {
        width: 27px;
        height: 1px;
        background: repeating-linear-gradient(90deg, #e59a50 0 5px, transparent 5px 7px);
    }

    .guide.v {
        top: calc(50% - 16px);
        width: 16px;
        height: 32px;
    }

    .guide.v::after {
        width: 1px;
        height: 27px;
        background: repeating-linear-gradient(#e59a50 0 5px, transparent 5px 7px);
    }

    .guide.h.start {
        top: 2px;
    }

    .guide.h.end {
        bottom: 2px;
    }

    .guide.v.start {
        left: 1px;
    }

    .guide.v.end {
        right: 2px;
    }

    .quickbar {
        height: 19px;
        flex: none;
        display: flex;
        background: var(--panel);
    }

    .zooms {
        width: 70px;
        display: flex;
        justify-content: space-around;
    }

    .quick {
        flex: 1;
        min-width: 0;
        display: flex;
        align-items: center;
        border-left: 1px solid #999;
        padding-right: 4px;
    }

    .glyph {
        width: 28px;
        flex: none;
        display: flex;
        justify-content: center;
    }

    .quick select {
        flex: 1;
        text-align: center;
        text-align-last: center;
    }

    .navigator {
        width: 181px;
        flex: none;
        display: flex;
        flex-direction: column;
        overflow: hidden;
        background: var(--panel);
        border-left: 1px solid var(--line);
    }

    .navigator .handle {
        width: 68px;
        margin-bottom: 4px;
    }

    .nav-modes {
        display: flex;
        align-items: center;
        gap: 10px;
        padding: 0 4px 0 2px;
    }

    .nav-modes .btn.on {
        min-width: 30px;
        height: 29px;
        margin-right: -4px;
    }

    .nav-modes .bar {
        height: 18px;
    }

    .nav-modes .menu {
        min-width: 32px;
        height: 21px;
        gap: 5px;
        margin-left: auto;
    }

    .search {
        height: 22px;
        flex: none;
        display: flex;
        align-items: center;
        gap: 4px;
        margin: 7px 3px 1px;
        padding: 0 4px;
        background: #fff;
        border-bottom: 1px solid #777;
    }

    .search input {
        flex: 1;
    }

    .search input::placeholder {
        color: #555;
    }

    input:focus {
        outline: none;
    }

    ul {
        flex: 1;
        min-height: 0;
        overflow: hidden;
        margin: 0;
        padding: 0;
        list-style: none;
        background: #fff;
    }

    .node {
        width: 100%;
        height: 22px;
        justify-content: flex-start;
        padding-left: 7px;
        overflow: hidden;
    }

    .node.level1 {
        padding-left: 17px;
    }

    .node.level2 {
        padding-left: 27px;
    }

    .node.selected {
        background: #d9d9d9;
        font-weight: 700;
    }

    .node.tint .node-icon .icon {
        fill: #ececec;
    }

    .arrow {
        flex: none;
        width: 12px;
        display: flex;
    }

    .node-icon {
        flex: none;
        width: 22px;
        margin-right: 3px;
        display: flex;
        justify-content: center;
    }

    .props {
        flex: none;
        padding: 3px 3px 3px 2px;
    }

    .props .handle {
        display: block;
        width: 102px;
        height: 2px;
        margin: 4px 0 15px 15px;
    }

    .actions {
        display: flex;
        gap: 14px;
        padding: 0 0 8px 7px;
    }

    .actions button {
        width: 16px;
        height: 17px;
    }

    .props-head {
        width: 100%;
        height: 22px;
        justify-content: flex-start;
        gap: 9px;
        padding-left: 7px;
        background: #d6d6d6;
        border-radius: 3px;
    }

    .story-name {
        height: 27px;
        display: flex;
        align-items: center;
        padding-left: 3px;
    }

    .story-name span {
        width: 44px;
        padding-left: 3px;
    }

    .story-name input {
        flex: 1;
        height: 18px;
        padding: 0 3px;
        background: #fff;
        border-bottom: 1px solid #777;
    }

    .settings {
        width: 100%;
        height: 21px;
    }

    footer {
        height: 22px;
        flex: none;
        display: flex;
        align-items: center;
        background: var(--panel);
        border-radius: 0 0 8px 8px;
    }

    .hint {
        flex: 1;
        padding-left: 2px;
        font-size: 13px;
    }

    footer button {
        width: 26px;
        height: 20px;
    }

    .brand {
        width: 131px;
        height: 20px;
        line-height: 20px;
        text-align: center;
        font-family: Lato, 'Open Sans', sans-serif;
        font-size: 13px;
        color: #999;
        border: solid #ccc;
        border-width: 0 1px;
    }

    .brand span {
        color: #bbb;
    }

    .resize {
        width: 9px;
        height: 9px;
        margin: 6px 2px 0 12px;
        background: repeating-conic-gradient(#bbb 0 25%, transparent 0 50%) 0 0 / 4px 4px;
        clip-path: polygon(100% 0, 100% 100%, 0 100%);
    }
</style>
